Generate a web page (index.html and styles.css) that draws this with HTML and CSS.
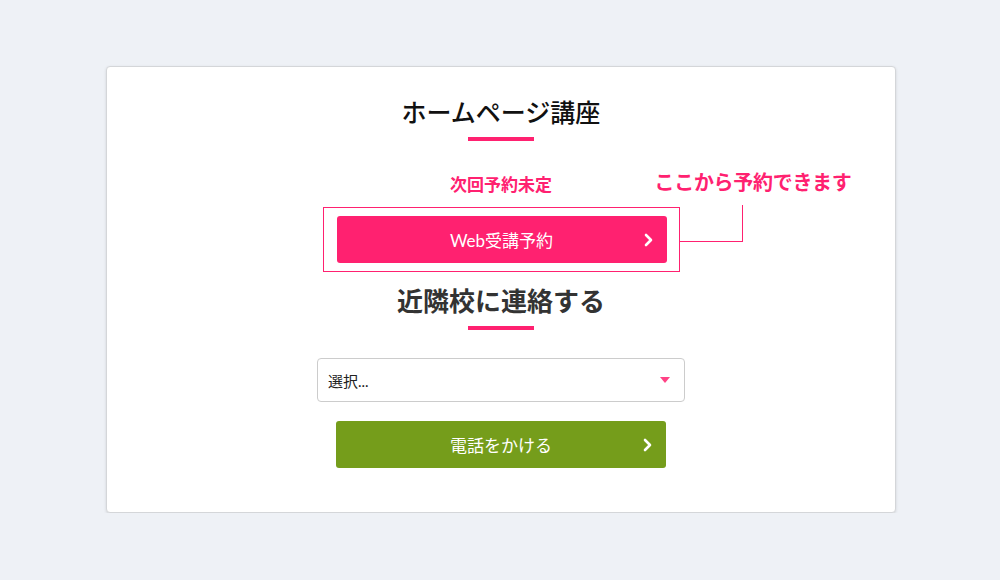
FILE: index.html
```html
<!DOCTYPE html>
<html lang="ja">
<head>
    <meta charset="UTF-8">
    <meta name="viewport" content="width=device-width, initial-scale=1.0">
    <title>ホームページ講座</title>
    <link rel="stylesheet" href="styles.css">
</head>
<body>
    <div class="card">
        <h1 class="title">ホームページ講座</h1>
        <div class="bar"></div>

        <p class="next">次回予約未定</p>
        <div class="highlight">
            <a class="btn btn-pink" href="#">
                Web受講予約
                <svg class="chev" viewBox="0 0 10 14" width="10" height="14"><path d="M2 2l5 5-5 5" fill="none" stroke="#fff" stroke-width="2.6" stroke-linecap="round" stroke-linejoin="round"/></svg>
            </a>
            <div class="callout-line"></div>
            <span class="callout">ここから予約できます</span>
        </div>

        <h2 class="title sub">近隣校に連絡する</h2>
        <div class="bar"></div>

        <div class="select">
            <span>選択...</span>
            <span class="caret"></span>
        </div>
        <a class="btn btn-green" href="#">
            電話をかける
            <svg class="chev" viewBox="0 0 10 14" width="10" height="14"><path d="M2 2l5 5-5 5" fill="none" stroke="#fff" stroke-width="2.6" stroke-linecap="round" stroke-linejoin="round"/></svg>
        </a>
    </div>
</body>
</html>
```

FILE: styles.css
```css
body {
    margin: 0;
    background-color: #eef1f6;
    font-family: Lato, "Noto Sans CJK JP", sans-serif;
    color: #333;
}
.card {
    width: 788px;
    margin: 66px 0 0 106px;
    padding: 27px 0 44px;
    background-color: #fff;
    border: 1px solid #d4d6d9;
    border-radius: 4px;
    box-shadow: 0 1px 3px rgba(0,0,0,0.12);
    display: flex;
    flex-direction: column;
    align-items: center;
}
.title {
    margin: 0;
    font-size: 25px;
    line-height: 36px;
    font-weight: 500;
    color: #111;
}
.title.sub {
    margin-top: 11px;
    font-size: 26px;
    font-weight: 700;
    color: #333;
}
.bar {
    width: 66px;
    height: 4px;
    margin-top: 7px;
    background-color: #ff2170;
}
.next {
    margin: 33px 0 0;
    font-size: 17px;
    line-height: 22px;
    font-weight: 700;
    color: #ff2170;
}
.highlight {
    position: relative;
    margin-top: 11px;
    width: 329px;
    padding: 8px 13px 8px 13px;
    border: 1px solid #ff2170;
}
.btn {
    position: relative;
    display: flex;
    align-items: center;
    justify-content: center;
    width: 330px;
    height: 47px;
    border-radius: 3px;
    color: #fff;
    font-size: 17px;
    text-decoration: none;
}
.btn-pink {
    background-color: #ff2170;
}
.btn-green {
    margin-top: 19px;
    background-color: #759d1b;
}
.chev {
    position: absolute;
    right: 13px;
    top: 17px;
}
.callout-line {
    position: absolute;
    left: 356px;
    top: -3px;
    width: 62px;
    height: 36px;
    border-right: 1px solid #ff2170;
    border-bottom: 1px solid #ff2170;
}
.callout {
    position: absolute;
    left: 331px;
    top: -40px;
    white-space: nowrap;
    font-size: 20px;
    line-height: 28px;
    font-weight: 700;
    letter-spacing: -0.3px;
    color: #ff2170;
}
.select {
    margin-top: 28px;
    box-sizing: border-box;
    width: 368px;
    height: 44px;
    padding: 0 14px 0 10px;
    border: 1px solid #ccc;
    border-radius: 4px;
    display: flex;
    align-items: center;
    justify-content: space-between;
    font-size: 15px;
    color: #222;
}
.caret {
    width: 0;
    height: 0;
    border-left: 5px solid transparent;
    border-right: 5px solid transparent;
    border-top: 6px solid #ff2170;
    opacity: 0.85;
}
```
